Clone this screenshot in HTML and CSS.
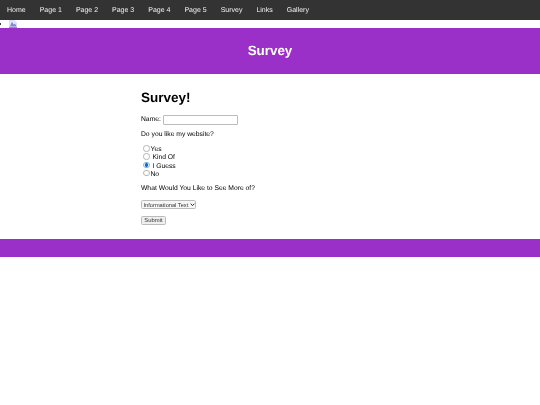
FILE: index.html
```html
<!DOCTYPE html>
<html lang="en">
<head>
    <meta charset="UTF-8">
    <meta name="viewport" content="width=device-width, initial-scale=1.0">
    <title>Survey</title>
    <link rel="stylesheet" href="styles.css">
</head>
<body>
    <!-- Top nav -->
    <nav class="topnav">
        <a href="#">Home</a>
        <a href="#">Page 1</a>
        <a href="#">Page 2</a>
        <a href="#">Page 3</a>
        <a href="#">Page 4</a>
        <a href="#">Page 5</a>
        <a href="#">Survey</a>
        <a href="#">Links</a>
        <a href="#">Gallery</a>
    </nav>
    <ul class="social">
        <li>
            <a href="#">
                <svg class="broken_img" viewBox="0 0 16 14" aria-hidden="true">
                    <path d="M1 0.5H10L15 5V13.5H1Z" fill="#e6e9fa" stroke="#c3c7ee"/>
                    <path d="M2 13L6 3L9 9L12 7L15 13Z" fill="#7f87d8"/>
                </svg>
            </a>
        </li>
    </ul>
    <header class="banner">
        <h2>Survey</h2>
    </header>
    <main class="content">
        <h1>Survey!</h1>
        <form>
            <p class="name_row">
                <label for="name">Name:</label>
                <input type="text" id="name">
            </p>
            <p class="question">Do you like my website?</p>
            <div class="choices">
                <label><input type="radio" name="like">Yes</label>
                <label><input type="radio" name="like">&nbsp;Kind Of</label>
                <label><input type="radio" name="like" checked>&nbsp;I Guess</label>
                <label><input type="radio" name="like">No</label>
            </div>
            <p>What Would You Like to See More of?</p>
            <p>
                <span class="select_box">
                    <select>
                        <option>Informational Text</option>
                    </select>
                    <svg class="select_arrow" viewBox="0 0 6 4" aria-hidden="true">
                        <path d="M0.8 0.8L3 3L5.2 0.8" fill="none" stroke="#222" stroke-width="1.2"/>
                    </svg>
                </span>
            </p>
            <button type="button" class="submit_btn">Submit</button>
        </form>
    </main>
    <footer class="bottom"></footer>
</body>
</html>
```

FILE: styles.css
```css
* {
    box-sizing: border-box;
}
body {
    margin: 0;
    font-family: "Liberation Sans", Arial, sans-serif;
    font-size: 6.75px;
    color: #000;
    background: #fff;
    text-rendering: geometricPrecision;
}
/* Top nav */
.topnav {
    display: flex;
    background-color: #333;
    will-change: transform;
}
.topnav a {
    color: #f2f2f2;
    text-decoration: none;
    font-size: 7px;
    line-height: 8px;
    padding: 7px 7px 5px;
}
/* Broken image link */
.social {
    margin: 0;
    padding: 0 0 0 9px;
    height: 8px;
    font-size: 7px;
    line-height: 8px;
}
.social a {
    display: block;
    width: 8px;
    height: 8px;
    border-bottom: 1px solid #8a8fe6;
}
.broken_img {
    display: block;
    width: 8px;
    height: 7px;
}
/* Purple bars */
.banner {
    background-color: #9b30c8;
    padding: 15px 0;
    text-align: center;
    will-change: transform;
}
.banner h2 {
    margin: 0;
    color: #fff;
    font-size: 13.4px;
    line-height: 16px;
}
.bottom {
    background-color: #9b30c8;
    height: 18px;
}
/* Survey form */
.content {
    width: 50%;
    margin: 0 auto;
    padding: 16px 0 14px 6px;
    will-change: transform;
}
.content h1 {
    margin: 0 0 8px;
    font-size: 13.5px;
    line-height: 16px;
}
.content p {
    margin: 0 0 7px;
    line-height: 8px;
}
.content .name_row {
    display: flex;
    align-items: center;
    gap: 2px;
    height: 11px;
    margin-bottom: 6px;
}
.content .question {
    margin-bottom: 6px;
}
.name_row input {
    width: 75px;
    height: 10px;
    padding: 0;
    border: 1px solid #bbb;
    border-radius: 1px;
}
.choices {
    margin-bottom: 7px;
}
.choices label {
    display: block;
    height: 8.33px;
    line-height: 8.33px;
}
.choices input {
    appearance: none;
    width: 6.5px;
    height: 6.5px;
    margin: 0 1px 0 2px;
    vertical-align: -1px;
    border: 0.5px solid #b5b5b5;
    border-radius: 50%;
    background: #fff;
}
.choices input:checked {
    border-color: #7fb2e5;
    background: radial-gradient(circle, #0b6fd0 0 1.6px, #fff 2.1px);
}
.select_box {
    position: relative;
    display: block;
    width: 55px;
    height: 8.5px;
}
.select_box select {
    appearance: none;
    display: block;
    width: 55px;
    height: 8.5px;
    padding: 0 0 0 1.5px;
    font-family: "Liberation Sans", Arial, sans-serif;
    font-size: 5.7px;
    color: #333;
    background: #f6f6f6;
    border: 1px solid #bbb;
    border-radius: 1.5px;
}
.select_arrow {
    position: absolute;
    top: 2.5px;
    right: 1.5px;
    width: 5px;
    height: 3.5px;
}
.submit_btn {
    display: block;
    width: 25px;
    height: 9px;
    padding: 0;
    font-family: "Liberation Sans", Arial, sans-serif;
    font-size: 5.9px;
    line-height: 7px;
    color: #333;
    background-color: #efefef;
    border: 1px solid #bbb;
    border-radius: 1.5px;
}
```
